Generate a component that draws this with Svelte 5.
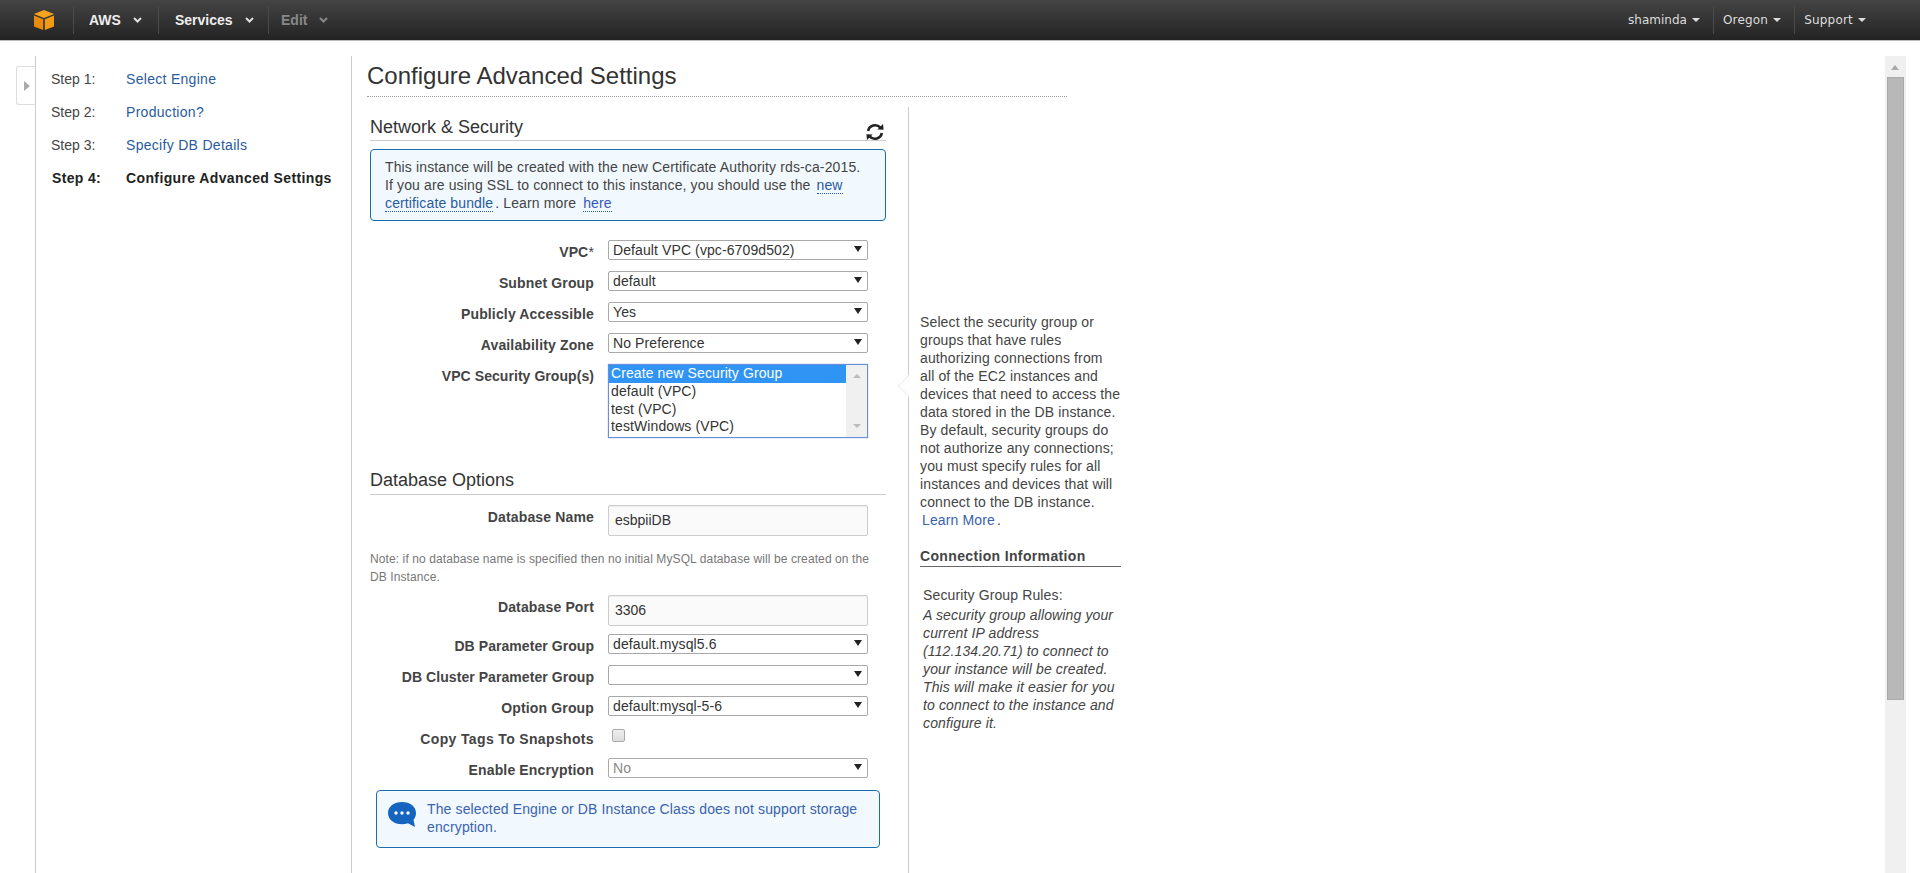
<script>
  const steps = [
    { n: 'Step 1:', t: 'Select Engine' },
    { n: 'Step 2:', t: 'Production?' },
    { n: 'Step 3:', t: 'Specify DB Details' },
    { n: 'Step 4:', t: 'Configure Advanced Settings', cur: true }
  ];
  const netRows = [
    { l: 'VPC', req: true, v: 'Default VPC (vpc-6709d502)' },
    { l: 'Subnet Group', v: 'default' },
    { l: 'Publicly Accessible', v: 'Yes' },
    { l: 'Availability Zone', v: 'No Preference' }
  ];
  const dbRows = [
    { l: 'DB Parameter Group', v: 'default.mysql5.6', tight: true },
    { l: 'DB Cluster Parameter Group', v: '', tight: true },
    { l: 'Option Group', v: 'default:mysql-5-6' }
  ];
  const opts = ['Create new Security Group', 'default (VPC)', 'test (VPC)', 'testWindows (VPC)'];
</script>

<div class="top">
  <div class="logo">
    <svg width="22" height="22" viewBox="0 0 22 22">
      <path d="M11 1 L21 5 L11 9 L1 5 Z" fill="#f7a41d"/>
      <path d="M1 6.5 L10.2 10.2 V21 L1 17.5 Z" fill="#e88b0c"/>
      <path d="M21 6.5 L11.8 10.2 V21 L21 17.5 Z" fill="#f29a12"/>
    </svg>
  </div>
  <div class="mi first"><b>AWS</b><svg class="chev" width="9" height="6" viewBox="0 0 9 6"><path d="M1 1 L4.5 4.5 L8 1" fill="none" stroke="#ddd" stroke-width="2"/></svg></div>
  <div class="mi svc"><b>Services</b><svg class="chev" width="9" height="6" viewBox="0 0 9 6"><path d="M1 1 L4.5 4.5 L8 1" fill="none" stroke="#ddd" stroke-width="2"/></svg></div>
  <div class="mi edit"><b>Edit</b><svg class="chev" width="9" height="6" viewBox="0 0 9 6"><path d="M1 1 L4.5 4.5 L8 1" fill="none" stroke="#888" stroke-width="2"/></svg></div>
  <div class="right">
    <div class="ri who">shaminda<i class="caret"></i></div>
    <div class="ri sep region">Oregon<i class="caret"></i></div>
    <div class="ri sep">Support<i class="caret"></i></div>
  </div>
</div>

<div class="page">
  <div class="nav">
    <div class="tab"><i></i></div>
    {#each steps as s}
      <div class="step" class:cur={s.cur}>
        <span class="n">{s.n}</span><span class="t">{s.t}</span>
      </div>
    {/each}
  </div>

  <div class="main">
    <h1>Configure Advanced Settings</h1>
    <div class="cols">
      <div class="form">
        <div class="sec">
          <h2>Network &amp; Security</h2>
          <svg class="refresh" width="20" height="18" viewBox="0 0 20 18">
            <path d="M3.2 8 A7 6.6 0 0 1 15.4 4.6" fill="none" stroke="#222" stroke-width="2.6"/>
            <path d="M12.4 6.4 L18.6 6.8 L18 1 Z" fill="#222"/>
            <path d="M16.8 10 A7 6.6 0 0 1 4.6 13.4" fill="none" stroke="#222" stroke-width="2.6"/>
            <path d="M7.6 11.6 L1.4 11.2 L2 17 Z" fill="#222"/>
          </svg>
        </div>
        <div class="info">
          This instance will be created with the new Certificate Authority rds-ca-2015.<br />
          If you are using SSL to connect to this instance, you should use the <a href="#a" class="l1">new<br />certificate bundle</a>. Learn more <a href="#b" class="here">here</a>
        </div>

        <div class="rows netrows">
          {#each netRows as r}
            <div class="row">
              <div class="lab">{r.l}{#if r.req}<span class="star">*</span>{/if}</div>
              <div class="sel"><span>{r.v}</span><i class="arrow"></i></div>
            </div>
          {/each}
          <div class="row list-row">
            <div class="lab tight">VPC Security Group(s)</div>
            <div class="list">
              <div class="opts">
                {#each opts as o, i}
                  <div class="opt" class:on={i === 0}>{o}</div>
                {/each}
              </div>
              <div class="lsb"><i class="up"></i><i class="down"></i></div>
            </div>
          </div>
        </div>

        <div class="sec dbsec"><h2>Database Options</h2></div>
        <div class="row inrow">
          <div class="lab">Database Name</div>
          <div class="inp">esbpiiDB</div>
        </div>
        <p class="note">Note: if no database name is specified then no initial MySQL database will be created on the DB Instance.</p>
        <div class="row inrow port">
          <div class="lab">Database Port</div>
          <div class="inp">3306</div>
        </div>
        <div class="rows">
          {#each dbRows as r}
            <div class="row">
              <div class="lab" class:tight={r.tight}>{r.l}</div>
              <div class="sel"><span>{r.v}</span><i class="arrow"></i></div>
            </div>
          {/each}
          <div class="row">
            <div class="lab wide">Copy Tags To Snapshots</div>
            <div class="chk"></div>
          </div>
          <div class="row">
            <div class="lab">Enable Encryption</div>
            <div class="sel dis"><span>No</span><i class="arrow"></i></div>
          </div>
        </div>
        <div class="notice">
          <svg width="32" height="28" viewBox="0 0 32 28">
            <path d="M15 1 C23 1 29 5.500 29 12 C29 15 28 17 26.500 18.800 L28 26 L21 22.300 C19 23 17 23.300 15 23.300 C7 23.300 1 18.500 1 12 C1 5.500 7 1 15 1 Z" fill="#1565c0"/>
            <circle cx="9" cy="12" r="1.700" fill="#fff"/><circle cx="15" cy="12" r="1.700" fill="#fff"/><circle cx="21" cy="12" r="1.700" fill="#fff"/>
          </svg>
          <div>The selected Engine or DB Instance Class does not support storage encryption.</div>
        </div>
      </div>

      <div class="help">
        <i class="pointer"></i>
        <p class="htxt">Select the security group or groups that have rules authorizing connections from<br />all of the EC2 instances and devices that need to access the data stored in the DB instance. By default, security groups do not authorize any connections; you must specify rules for all instances and devices that will connect to the DB instance. <a href="#c">Learn More</a>.</p>
        <h3>Connection Information</h3>
        <div class="rules">
          <div>Security Group Rules:</div>
          <em>A security group allowing your current IP address (112.134.20.71) to connect to your instance will be created. This will make it easier for you to connect to the instance and configure it.</em>
        </div>
      </div>
    </div>
  </div>

  <div class="sb"><i class="sbup"></i><div class="thumb"></div></div>
</div>

<style>
  :global(body) { margin: 0; background: #fff; overflow: hidden; font-family: "Liberation Sans", Arial, sans-serif; }
  .top { height: 40px; border-bottom: 1px solid #bbb; background: linear-gradient(#444, #232323); display: flex; align-items: center; color: #eee; }
  .logo { width: 73px; height: 40px; display: flex; align-items: center; justify-content: flex-end; box-sizing: border-box; }
  .logo svg { margin-right: 18px; }
  .mi { height: 28px; display: flex; align-items: center; font-size: 14px; border-left: 1px solid #4a4a4a; box-sizing: border-box; }
  .mi b { color: #eee; }
  .chev { margin-left: 12px; }
  .first { padding-left: 15px; width: 85px; }
  .svc { padding-left: 16px; width: 110px; }
  .edit { padding-left: 12px; width: 80px; }
  .edit b { color: #888; }
  .right { margin-left: auto; display: flex; align-items: center; padding-right: 54px; font-family: "DejaVu Sans", sans-serif; font-size: 12px; color: #ddd; letter-spacing: .2px; }
  .ri { height: 28px; display: flex; align-items: center; }
  .ri.who { letter-spacing: 0; }
  .ri.sep { border-left: 1px solid #4a4a4a; padding-left: 9px; margin-left: 13px; }
  .caret { width: 0; height: 0; margin-left: 5px; border: 4px solid transparent; border-top-color: #ddd; border-bottom: 0; }
  .page { display: flex; height: 832px; padding-top: 15px; box-sizing: border-box; overflow: hidden; }
  .nav { position: relative; margin-left: 35px; border-left: 1px solid #ccc; border-right: 1px solid #ccc; flex: none; width: 315px; padding-top: 6px; }
  .tab { position: absolute; left: -20px; top: 10px; width: 19px; height: 39px; box-sizing: border-box; background: #fff; border: 1px solid #ddd; border-right: 0; border-radius: 3px 0 0 3px; }
  .tab i { position: absolute; left: 7px; top: 14px; border: 5.500px solid transparent; border-left: 6px solid #aaa; border-right: 0; }
  .step { height: 33px; display: flex; align-items: center; font-size: 14px; color: #444; padding-left: 15px; }
  .step .n { width: 75px; }
  .step .t { color: #2a5b9c; letter-spacing: .3px; }
  .step.cur { font-weight: bold; color: #222; padding-left: 16px; letter-spacing: .35px; }
  .step.cur .n { width: 74px; }
  .step.cur .t { color: #222; letter-spacing: .38px; }
  .main { width: 700px; margin-left: 15px; flex: none; }
  h1 { margin: 0; font-size: 24px; font-weight: normal; color: #333; height: 40px; line-height: 40px; border-bottom: 1px dotted #999; box-sizing: content-box; }
  .cols { display: flex; margin-top: 10px; }
  .form { margin-left: 3px; width: 516px; padding-right: 22px; border-right: 1px solid #ccc; flex: none; height: 800px; }
  .sec { position: relative; height: 34px; border-bottom: 1px solid #ccc; box-sizing: border-box; }
  h2 { margin: 0; font-size: 18px; font-weight: normal; color: #333; line-height: 21px; padding-top: 10px; }
  .dbsec h2 { padding-top: 0; }
  .refresh { position: absolute; right: 1px; top: 16px; }
  .info { margin-top: 8px; height: 72px; box-sizing: border-box; padding: 8px 14px; border: 1px solid #1b6bb0; border-radius: 4px; background: #f1f9fe; font-size: 14px; line-height: 18px; color: #444; letter-spacing: .13px; }
  .info a { color: #2a5b9c; text-decoration: none; border-bottom: 1px dotted #2a5b9c; }
  .info a.l1 { margin-left: 2px; margin-right: 2px; }
  .info a.here { color: #3355bb; margin-left: 3px; }
  .rows { display: flex; flex-direction: column; gap: 11px; }
  .netrows { margin-top: 19px; }
  .row { display: flex; gap: 14px; height: 20px; }
  .lab { width: 224px; text-align: right; font-size: 14px; font-weight: bold; color: #444; letter-spacing: .15px; line-height: 20px; padding-top: 2px; box-sizing: border-box; flex: none; white-space: nowrap; }
  .lab.tight { letter-spacing: .06px; }
  .lab.wide { letter-spacing: .35px; }
  .star { font-weight: normal; }
  .sel { width: 260px; height: 20px; box-sizing: border-box; border: 1px solid #a9a9a9; border-radius: 2px; background: #fff; font-size: 14px; color: #333; padding-left: 4px; line-height: 18px; letter-spacing: .1px; display: flex; justify-content: space-between; }
  .arrow { width: 0; height: 0; margin: 5px 5px 0 0; border: 4px solid transparent; border-top: 6px solid #222; border-bottom: 0; }
  .sel.dis { color: #888; }
  .list-row { height: 74px; }
  .list { width: 260px; height: 74px; box-sizing: border-box; border: 1px solid #6a8ed8; box-shadow: 0 0 1px #7aa0e0; display: flex; font-size: 14px; color: #333; overflow: hidden; letter-spacing: .1px; }
  .opts { flex: 1; }
  .opt { height: 17.500px; line-height: 17px; padding-left: 2px; }
  .opt.on { height: 18px; background: #3094f5; color: #fff; }
  .lsb { width: 21px; background: #f0f0f0; position: relative; }
  .up { position: absolute; left: 7px; top: 9px; border: 4px solid transparent; border-bottom: 4px solid #bbb; border-top: 0; }
  .down { position: absolute; left: 7px; bottom: 9px; border: 4px solid transparent; border-top: 4px solid #bbb; border-bottom: 0; }
  .dbsec { margin-top: 32px; height: 25px; }
  .inrow { height: 31px; margin-top: 10px; }
  .inrow .lab { padding-top: 1px; line-height: 22px; }
  .inp { width: 260px; height: 31px; box-sizing: border-box; border: 1px solid #ccc; border-radius: 2px; background: #fafafa; font-size: 14px; color: #333; padding-left: 6px; line-height: 28px; box-shadow: inset 0 1px 1px #eee; }
  .note { margin: 14px 0 0; font-size: 12px; line-height: 18px; color: #777; width: 510px; letter-spacing: .1px; }
  .port { margin-top: 9px; margin-bottom: 8px; }
  .chk { width: 13px; height: 13px; margin: 2px 0 0 4px; box-sizing: border-box; border: 1px solid #aaa; border-radius: 2px; background: linear-gradient(#eee, #ddd); }
  .notice { margin: 12px 6px 0 6px; height: 58px; box-sizing: border-box; border: 1px solid #1b6bb0; border-radius: 4px; background: #f1f9fe; display: flex; gap: 8px; padding: 9px 10px 0 10px; font-size: 14px; line-height: 18px; color: #3a62ad; letter-spacing: .13px; }
  .notice svg { flex: none; margin-top: 1px; }
  .help { position: relative; width: 202px; margin-left: 11px; padding-top: 206px; font-size: 14px; line-height: 18px; color: #444; flex: none; letter-spacing: .13px; }
  .pointer { position: absolute; left: -19px; top: 271px; width: 15px; height: 15px; background: #fff; border-left: 1px solid #eee; border-bottom: 1px solid #eee; transform: rotate(45deg); }
  .htxt { margin: 0; position: relative; }
  .help a { color: #3a62ad; text-decoration: none; padding-left: 2px; margin-right: 2px; }
  h3 { margin: 18px 0 0; font-size: 14px; line-height: 19px; border-bottom: 1px solid #666; color: #444; letter-spacing: .35px; height: 19px; width: 201px; }
  .rules { padding: 19px 0 0 3px; }
  .rules div { margin-bottom: 2px; }
  .sb { margin-left: auto; margin-right: 14px; width: 21px; background: #f0f0f0; position: relative; flex: none; }
  .sbup { position: absolute; left: 6px; top: 9px; border: 4.500px solid transparent; border-bottom: 5px solid #aaa; border-top: 0; }
  .thumb { position: absolute; left: 2px; top: 21px; width: 17px; height: 623px; background: #b8b8b8; border: 1px solid #aaa; box-sizing: border-box; }
</style>
